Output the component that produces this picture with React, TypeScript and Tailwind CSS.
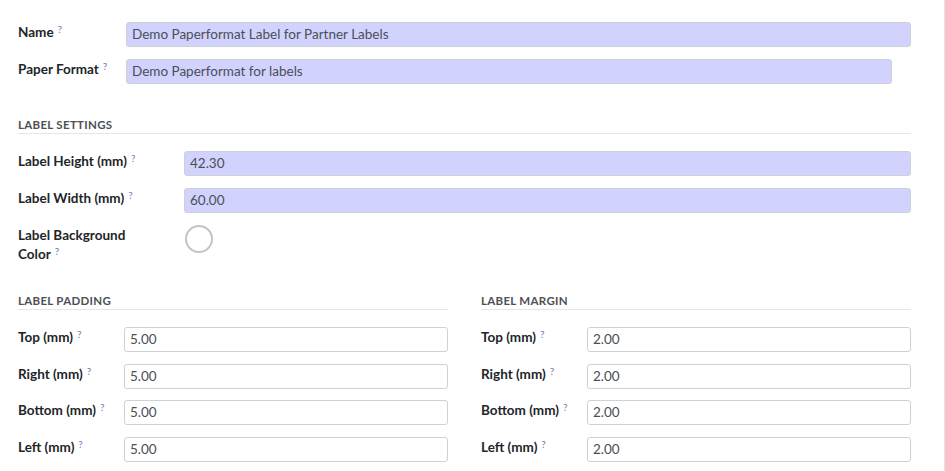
import React from 'react';

const FONT = 'font-["Lato","Noto_Sans",sans-serif]';

function Help() {
  return (
    <span className="inline-block align-top ml-[4px] mt-[1px] text-[10px] leading-[10px] font-normal text-[#7776b5]">?</span>
  );
}

function Field({ value, tinted, className = '' }: { value: string; tinted?: boolean; className?: string }) {
  return (
    <div
      className={`h-[25px] flex items-center px-[5px] border border-[#cfd1d4] rounded-[3px] text-[13.5px] text-[#4a4f55] ${
        tinted ? 'bg-[#d2d2ff]' : 'bg-white'
      } ${className}`}
    >
      {value}
    </div>
  );
}

function Label({ children }: { children: React.ReactNode }) {
  return <div className="text-[13.5px] font-bold text-[#212529] leading-[19px] pt-[1px]">{children}</div>;
}

function Header({ title, className = '' }: { title: string; className?: string }) {
  return (
    <div className={`text-[11.5px] font-bold uppercase tracking-[0.3px] text-[#4d5156] leading-[16px] border-b border-[#e4e6e8] ${className}`}>
      {title}
    </div>
  );
}

function SideGroup({ title, values }: { title: string; values: string[] }) {
  const labels = ['Top (mm)', 'Right (mm)', 'Bottom (mm)', 'Left (mm)'];
  return (
    <div>
      <Header title={title} />
      <div className="grid grid-cols-[106px_1fr] gap-y-[11.5px] mt-[17px]">
        {labels.map((l, i) => (
          <React.Fragment key={l}>
            <Label>
              {l}
              <Help />
            </Label>
            <Field value={values[i]} />
          </React.Fragment>
        ))}
      </div>
    </div>
  );
}

export default function App() {
  return (
    <div className={`${FONT} w-[945px] h-[471px] overflow-hidden bg-white border-r border-[#e2e4e6] pl-[18px] pr-[33px] pt-[22px]`}>
      <div className="grid grid-cols-[108px_1fr] gap-y-[12px]">
        <Label>
          Name
          <Help />
        </Label>
        <Field value="Demo Paperformat Label for Partner Labels" tinted />
        <Label>
          Paper Format
          <Help />
        </Label>
        <Field value="Demo Paperformat for labels" tinted className="mr-[19px]" />
      </div>

      <Header title="Label Settings" className="mt-[33px]" />
      <div className="grid grid-cols-[166px_1fr] gap-y-[12px] mt-[17px]">
        <Label>
          Label Height (mm)
          <Help />
        </Label>
        <Field value="42.30" tinted />
        <Label>
          Label Width (mm)
          <Help />
        </Label>
        <Field value="60.00" tinted />
        <div className="w-[120px]">
          <Label>
            Label Background Color
            <Help />
          </Label>
        </div>
        <div>
          <div className="w-[28px] h-[28px] rounded-full border-2 border-[#c4c4c4] ml-[1px]" />
        </div>
      </div>

      <div className="grid grid-cols-2 gap-x-[33px] mt-[29px]">
        <SideGroup title="Label Padding" values={['5.00', '5.00', '5.00', '5.00']} />
        <SideGroup title="Label Margin" values={['2.00', '2.00', '2.00', '2.00']} />
      </div>
    </div>
  );
}
